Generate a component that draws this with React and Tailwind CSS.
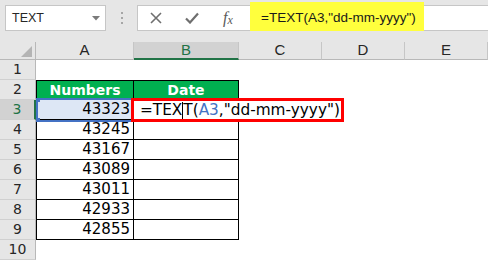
import React from "react";

const cols = ["A", "B", "C", "D", "E"];
const numbers = [43323, 43245, 43167, 43089, 43011, 42933, 42855];

function RowHeader({ n, active }) {
  return (
    <div
      className={
        "w-[36px] shrink-0 h-full flex items-center justify-center text-[14px] border-b border-[#d0d0d0] " +
        (active
          ? "bg-[#d2d2d2] text-[#217346] border-r-2 border-r-[#217346]"
          : "bg-[#e6e6e6] text-[#262626] border-r border-r-[#b8b8b8]")
      }
    >
      {n}
    </div>
  );
}

function Row({ n, children }) {
  return (
    <div className="flex h-[20px]">
      <RowHeader n={n} active={n === 3} />
      {children}
    </div>
  );
}

function Blank() {
  return <div className="flex-1 h-full bg-white" />;
}

export default function App() {
  return (
    <div className="relative w-[488px] h-[260px] overflow-hidden bg-white font-['DejaVu_Sans',sans-serif]">
      {/* formula bar */}
      <div className="flex items-start h-[42px] bg-[#e6e6e6] pt-[5px] pl-[5px]">
        <div className="w-[101px] h-[26px] bg-white border border-[#c6c6c6] flex items-center pl-[6px] pr-[5px] font-['Liberation_Sans',sans-serif] text-[12.5px] text-[#262626]">
          <span className="flex-1">TEXT</span>
          <svg width="8" height="5" viewBox="0 0 8 5">
            <path d="M0 0 L8 0 L4 4.5 Z" fill="#7b7b7b" />
          </svg>
        </div>
        <div className="w-[31px] h-[26px] flex flex-col items-center justify-center gap-[3px]">
          <span className="w-[2px] h-[2px] bg-[#a6a6a6]" />
          <span className="w-[2px] h-[2px] bg-[#a6a6a6]" />
          <span className="w-[2px] h-[2px] bg-[#a6a6a6]" />
        </div>
        <div className="flex-1 h-[26px] bg-white border border-r-0 border-[#c6c6c6] flex items-stretch">
          <div className="w-[36px] flex items-center justify-center">
            <svg width="12" height="12" viewBox="0 0 12 12">
              <path d="M1 1 L11 11 M11 1 L1 11" stroke="#6f6f6f" strokeWidth="1.6" />
            </svg>
          </div>
          <div className="w-[36px] flex items-center justify-center">
            <svg width="14" height="12" viewBox="0 0 14 12">
              <path d="M1 6.5 L5 10.5 L13 1.5" stroke="#6f6f6f" strokeWidth="2.2" fill="none" />
            </svg>
          </div>
          <div className="w-[36px] flex items-center justify-center font-['Liberation_Serif',serif] italic text-[16px] text-[#5a5a5a]">
            <span>f</span>
            <span className="text-[12px] mt-[4px]">x</span>
          </div>
          <div className="w-[4px]" />
          <div className="w-[174px] h-[29px] -mt-[4px] bg-[#ffff3d] flex items-center pl-[11px] pt-[4px] font-['Liberation_Sans',sans-serif] text-[13.5px] text-[#1a1a1a]">
            =TEXT(A3,"dd-mm-yyyy")
          </div>
        </div>
      </div>

      {/* column headers */}
      <div className="flex h-[18px] bg-[#e6e6e6] font-['Liberation_Sans',sans-serif] text-[15px] text-[#262626]">
        <div className="w-[36px] shrink-0 h-full border-r border-b border-[#b8b8b8] flex items-end justify-end pr-[3px] pb-[2px]">
          <svg width="11" height="11" viewBox="0 0 11 11">
            <path d="M11 0 L11 11 L0 11 Z" fill="#b4b4b4" />
          </svg>
        </div>
        {cols.map((c, i) => (
          <div
            key={c}
            className={
              "h-full flex items-center justify-center border-r border-[#c6c6c6] " +
              (i === 0 ? "w-[98px] " : i === 1 ? "w-[105px] " : i === 4 ? "flex-1 " : "w-[83px] ") +
              (c === "B"
                ? "bg-[#d2d2d2] text-[#217346] border-b-2 border-b-[#217346]"
                : "border-b border-b-[#b8b8b8]")
            }
          >
            {c}
          </div>
        ))}
      </div>

      {/* rows */}
      <Row n={1}>
        <Blank />
      </Row>
      <Row n={2}>
        <div className="w-[98px] h-full bg-[#00b050] border border-black flex items-center justify-center text-white font-bold text-[14px]">
          Numbers
        </div>
        <div className="w-[105px] h-full bg-[#00b050] border-y border-r border-black flex items-center justify-center text-white font-bold text-[14px]">
          Date
        </div>
        <Blank />
      </Row>
      {numbers.map((v, i) => (
        <Row key={v} n={i + 3}>
          <div
            className={
              "w-[98px] h-full border-x border-b border-black flex items-center justify-end pr-[3px] text-[15px] text-black " +
              (i === 0 ? "bg-[#dde7f5]" : "bg-white")
            }
          >
            {v}
          </div>
          <div className="w-[105px] h-full border-r border-b border-black bg-white" />
          <Blank />
        </Row>
      ))}
      <Row n={10}>
        <Blank />
      </Row>

      {/* reference outline around A3 */}
      <div className="absolute left-[36px] top-[98px] w-[99px] h-[24px] border-2 border-[#4472c4] pointer-events-none">
        <span className="absolute -left-[2px] -top-[2px] w-[4px] h-[4px] bg-[#4472c4]" />
        <span className="absolute -left-[2px] -bottom-[2px] w-[4px] h-[4px] bg-[#4472c4]" />
      </div>

      {/* in-cell editor */}
      <div className="absolute left-[131px] top-[98px] w-[213px] h-[24px] border-[3px] border-[#ff0000] bg-white flex items-center pl-[6px] text-[15.3px] text-black whitespace-nowrap">
        <span>=TEX</span>
        <span className="inline-block w-px h-[17px] bg-black" />
        <span>T(</span>
        <span className="text-[#4472c4]">A3</span>
        <span>,"dd-mm-yyyy")</span>
      </div>
    </div>
  );
}
